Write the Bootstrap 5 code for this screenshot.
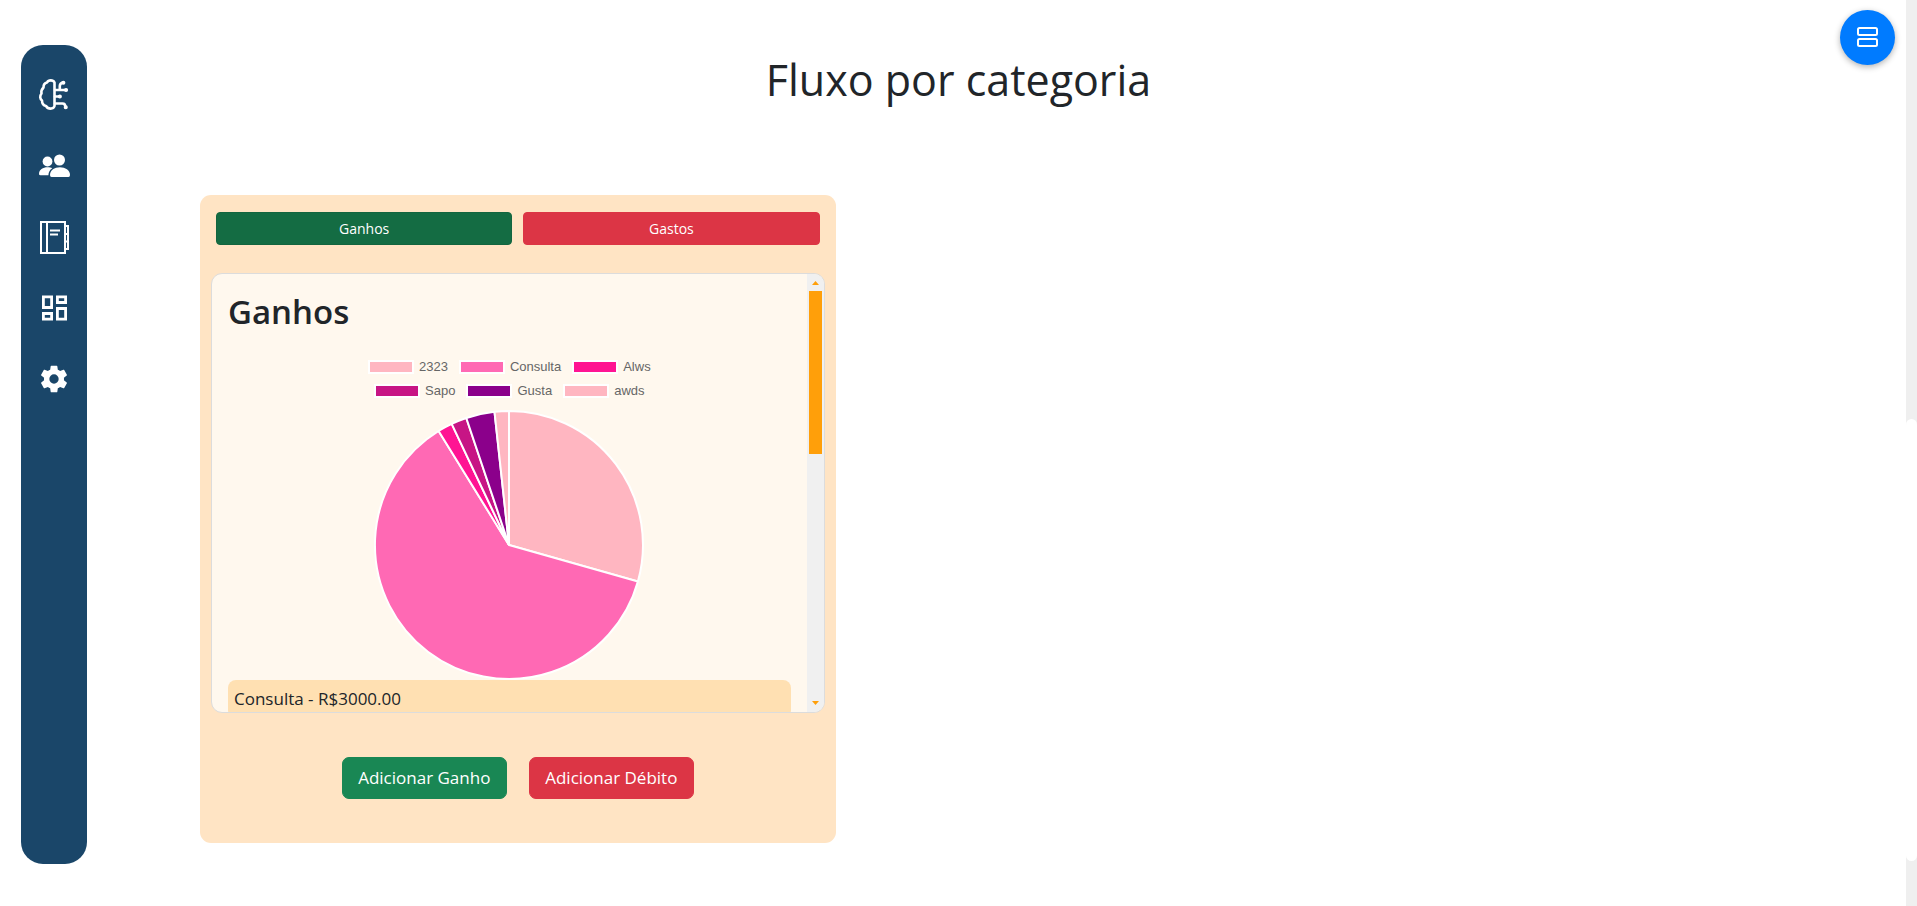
<!DOCTYPE html>
<html lang="pt-BR">
<head>
<meta charset="utf-8">
<meta name="viewport" content="width=device-width, initial-scale=1">
<title>Fluxo por categoria</title>
<link href="https://cdn.jsdelivr.net/npm/bootstrap@5.3.0/dist/css/bootstrap.min.css" rel="stylesheet">
<style>
  body { font-family: "Open Sans", "Noto Sans", sans-serif; font-size: 17px; line-height: 26px; }
  .side-col { width: 200px; }
  .side-menu { width: 66px; margin: 45px 0 42px 21px; padding-top: 34px; gap: 39px; border-radius: 22px; background: #1a4669; }
  .side-menu svg { width: 32px; height: 32px; }
  .page-title { font-size: 43px; line-height: 52px; margin: 54px 0 89px; }
  .flow-card { width: 41.9%; padding: 17px 11px 44px; border-radius: 11px; background: #ffe4c4; }
  .tab-row { gap: 11px; padding: 0 5px; margin-bottom: 28px; }
  .tab-row .btn { font-size: 14px; line-height: 21px; padding: 5px 8px; border-radius: 4px; }
  .flow-panel { height: 440px; border: 1px solid #dcdcdc; border-radius: 11px; background: #fff8ee; }
  .panel-body { padding: 16px; }
  .panel-title { font-size: 33px; line-height: 44px; font-weight: 600; margin-bottom: 21px; }
  .legend-row { height: 24px; gap: 11px; font: 13px/24px "Liberation Sans", Arial, sans-serif; color: #666; }
  .legend-row > span { gap: 5px; }
  .swatch { width: 46px; height: 14px; border: 2px solid #fff; }
  .pie { width: 270px; height: 270px; margin-top: 7px; }
  .entry { padding: 6px; border-radius: 8px; background: #ffe0b2; }
  .panel-bar { width: 17px; background: #f0f0f0; }
  .panel-bar svg { width: 17px; height: 17px; }
  .panel-thumb { width: 13px; height: 163px; background: #ff9f0a; }
  .actions { gap: 22px; margin-top: 44px; }
  .actions .btn { width: 165px; height: 42px; padding: 0; font-size: 17px; border-radius: 7px; }
  .btn-success { --bs-btn-bg: #198754; }
  .btn-success.active { --bs-btn-active-bg: #146c43; }
  .float-btn { top: 10px; right: 22px; width: 55px; height: 55px; background: #007bff; box-shadow: 0 2px 6px rgba(0,0,0,.3); }
  .page-bar { width: 11px; background: #efefef; padding: 419px 0 45px; }
  .page-thumb { border-radius: 6px; background: #fff; }
</style>
</head>
<body>
<div class="d-flex min-vh-100">
  <div class="side-col d-flex flex-shrink-0">
    <nav class="side-menu d-flex flex-column align-items-center" aria-label="Menu">
      <a href="#" class="d-flex" aria-label="Análise"><svg viewBox="0 0 32 32" fill="none" stroke="#fff" stroke-width="2.6" stroke-linecap="round" stroke-linejoin="round"><path d="M16.500 3.500C15 .7 10.500 .7 9 3.500 6.500 4 5.500 6 5.500 8.500 3.500 10.500 3 12.500 3.500 14.500 1.500 17 2 20 4 21.500 4 24.500 5.500 26.500 8 27 10 30.500 15.500 30.500 16.500 27Z"/><path d="M17 11h10.500M21.800 11V7q0-2.500 3-3.500M17 17.500h4.500M17 24.500h7.500q3 0 3 4"/><path d="M25.300 3.800h.1M28 11h.1M21.800 17.500h.1M27.700 28.300h.1" stroke-width="4"/></svg></a>
      <a href="#" class="d-flex" aria-label="Usuários"><svg viewBox="0 0 32 32" fill="#fff"><circle cx="9.500" cy="11.500" r="4.900"/><path d="M1 24c0-4.500 4-6.800 8.500-6.800 2 0 3.500.3 4.800 1-2.600 1.700-3.700 3.800-3.900 7H2.500Q1 25.200 1 24Z"/><circle cx="21.500" cy="10" r="5.500"/><path d="M12 25c0-4.800 4.500-7.800 9.900-7.800S32 20.200 32 25q0 1.900-1.500 1.900h-17Q12 26.900 12 25Z"/></svg></a>
      <a href="#" class="d-flex" aria-label="Agenda"><svg viewBox="0 0 32 32" fill="none" stroke="#fff" stroke-width="2" overflow="visible"><path d="M3 1h24v31H3ZM9 1v31M27 5h3v23h-3M27 13h3M27 20.500h3M12 9.500h10M12 13.500h8"/></svg></a>
      <a href="#" class="d-flex" aria-label="Painel"><svg viewBox="0 0 32 32" fill="none" stroke="#fff" stroke-width="2.800"><path d="M5.400 4.900h8.200v10.600H5.400ZM19.400 4.900h8.200v5.600h-8.200ZM5.400 21.500h8.200v5.600H5.400ZM19.400 16.500h8.200v10.600h-8.200Z"/></svg></a>
      <a href="#" class="d-flex" aria-label="Configurações"><svg viewBox="0 0 24 24" fill="#fff"><path d="M19.430 12.980c.04-.32.070-.64.070-.98s-.03-.66-.07-.98l2.110-1.650c.19-.15.24-.42.120-.64l-2-3.460c-.12-.22-.39-.3-.61-.22l-2.490 1c-.52-.4-1.080-.73-1.690-.98l-.38-2.650C14.460 2.180 14.250 2 14 2h-4c-.25 0-.46.18-.49.42l-.38 2.650c-.61.25-1.170.59-1.690.98l-2.490-1c-.23-.09-.49 0-.61.220l-2 3.460c-.13.22-.07.49.12.64l2.110 1.650c-.04.32-.07.65-.07.98s.03.66.070.98l-2.110 1.650c-.19.15-.24.42-.12.64l2 3.460c.12.22.39.3.61.220l2.490-1c.52.4 1.080.73 1.690.98l.38 2.650c.03.24.24.42.49.42h4c.25 0 .46-.18.49-.42l.38-2.650c.61-.25 1.170-.59 1.690-.98l2.490 1c.23.09.49 0 .61-.22l2-3.460c.12-.22.07-.49-.12-.64ZM12 15.500a3.500 3.500 0 1 1 0-7 3.500 3.500 0 0 1 0 7Z"/></svg></a>
    </nav>
  </div>

  <main class="flex-grow-1">
    <h1 class="page-title text-center fw-normal">Fluxo por categoria</h1>
    <section class="flow-card">
      <div class="tab-row d-flex">
        <button type="button" class="btn btn-success active flex-fill w-50">Ganhos</button>
        <button type="button" class="btn btn-danger flex-fill w-50">Gastos</button>
      </div>

      <div class="flow-panel d-flex overflow-hidden">
        <div class="panel-body flex-grow-1">
          <h2 class="panel-title">Ganhos</h2>
          <div class="legend-row d-flex justify-content-center">
            <span class="d-flex align-items-center"><i class="swatch" style="background:#ffb6c1"></i>2323</span>
            <span class="d-flex align-items-center"><i class="swatch" style="background:#ff69b4"></i>Consulta</span>
            <span class="d-flex align-items-center"><i class="swatch" style="background:#ff1493"></i>Alws</span>
          </div>
          <div class="legend-row d-flex justify-content-center">
            <span class="d-flex align-items-center"><i class="swatch" style="background:#c71585"></i>Sapo</span>
            <span class="d-flex align-items-center"><i class="swatch" style="background:#8b008b"></i>Gusta</span>
            <span class="d-flex align-items-center"><i class="swatch" style="background:#ffb6c1"></i>awds</span>
          </div>
          <svg class="pie d-block mx-auto" viewBox="-135 -135 270 270" stroke="#fff" stroke-width="2" stroke-linejoin="bevel" role="img" aria-label="Ganhos por categoria">
            <path fill="#ffb6c1" d="M0 0V-134A134 134 0 0 1 128.900 36.500Z"/>
            <path fill="#ff69b4" d="M0 0L128.900 36.500A134 134 0 1 1 -70.400 -114Z"/>
            <path fill="#ff1493" d="M0 0L-70.400 -114A134 134 0 0 1 -57.300 -121.100Z"/>
            <path fill="#c71585" d="M0 0L-57.300 -121.100A134 134 0 0 1 -42.700 -127Z"/>
            <path fill="#8b008b" d="M0 0L-42.700 -127A134 134 0 0 1 -14.500 -133.200Z"/>
            <path fill="#ffb6c1" d="M0 0L-14.500 -133.200A134 134 0 0 1 0 -134Z"/>
          </svg>
          <div class="entry">Consulta - R$3000.00</div>
        </div>
        <div class="panel-bar d-flex flex-column align-items-center flex-shrink-0">
          <svg viewBox="0 0 17 17" fill="#ff9f0a"><path d="M5 11h7L8.500 7Z"/></svg>
          <div class="panel-thumb"></div>
          <svg class="mt-auto" viewBox="0 0 17 17" fill="#ff9f0a"><path d="M5 6h7l-3.500 4Z"/></svg>
        </div>
      </div>

      <div class="actions d-flex justify-content-center">
        <button type="button" class="btn btn-success">Adicionar Ganho</button>
        <button type="button" class="btn btn-danger">Adicionar Débito</button>
      </div>
    </section>
  </main>

  <div class="side-col d-flex justify-content-end flex-shrink-0">
    <div class="page-bar d-flex"><div class="page-thumb w-100"></div></div>
  </div>
</div>

<button type="button" class="float-btn position-fixed border-0 rounded-circle d-flex align-items-center justify-content-center p-0" aria-label="Alternar visualização">
  <svg width="22" height="22" viewBox="0 0 22 22" fill="none" stroke="#fff" stroke-width="2"><rect x="1" y="1" width="19" height="7" rx="1.500"/><rect x="1" y="12" width="19" height="7" rx="1.500"/></svg>
</button>
<script src="https://cdn.jsdelivr.net/npm/bootstrap@5.3.0/dist/js/bootstrap.bundle.min.js"></script>
</body>
</html>
